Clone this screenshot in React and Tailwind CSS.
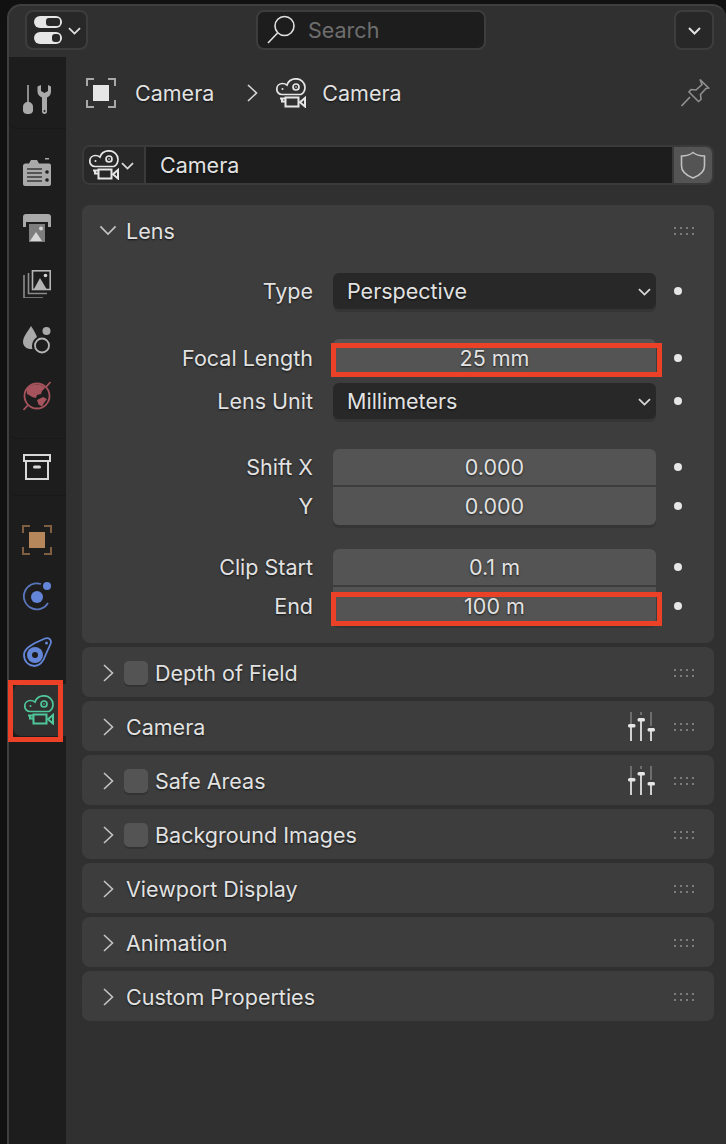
const shadow = '[text-shadow:0_1px_2px_rgba(0,0,0,0.7)]';

function ChevDown({ w = 13, color = '#d8d8d8', sw = 1.800, className = '' }) {
  return (
    <svg width={w} height={w * 0.62} viewBox="0 0 13 8" fill="none" stroke={color} strokeWidth={sw * 13 / w} className={`shrink-0 ${className}`}>
      <path d="M1 1l5.500 5.500L12 1" />
    </svg>
  );
}

function ChevRight({ color = '#c4c4c4', className = '' }) {
  return (
    <svg width="11" height="18" viewBox="0 0 11 18" fill="none" stroke={color} strokeWidth="1.600" className={`shrink-0 ${className}`}>
      <path d="M1 1l8.500 8L1 17" />
    </svg>
  );
}

function CameraIcon({ className = 'text-[#e6e6e6]', size = 30 }) {
  return (
    <svg width={size} height={size} viewBox="0 0 30 30" fill="none" stroke="currentColor" strokeWidth="1.700" className={className}>
      <path d="M6 16.500C2.800 16.500.8 14 .8 11 .8 7.800 3.300 5.500 6.500 5.500c1.800 0 3.200.5 4.500 1.600C12.200 3 15.600.8 20 .8c5 0 9 3.800 9 8.400 0 3.300-1.600 6-4.200 7.300H6Z" />
      <circle cx="20" cy="9" r="3" />
      <circle cx="20" cy="9" r="0.8" fill="currentColor" stroke="none" />
      <circle cx="6.500" cy="11" r="1" fill="currentColor" stroke="none" />
      <path d="M4 20.500h5M9.500 19.500h13v9h-13zM6 20.500v3h3.500" strokeWidth="2" />
      <path d="M29 20v8.500l-5-4.200z" strokeWidth="2" />
    </svg>
  );
}

function ObjectIcon({ color = '#e6e6e6', frame = '#a8a8a8' }) {
  return (
    <svg width="30" height="30" viewBox="0 0 30 30" fill="none">
      <path d="M1 8V1h7M22 1h7v7M29 22v7h-7M8 29H1v-7" stroke={frame} strokeWidth="2" />
      <rect x="7" y="7" width="16" height="16" fill={color} />
    </svg>
  );
}

function ToolIcon() {
  return (
    <svg width="28" height="30" viewBox="0 0 28 30" fill="#a9a9a9">
      <rect x="4.200" y="0" width="1.600" height="18" />
      <path d="M5 17c3 0 5 2 5 5v3c0 3-2 4-5 4s-5-1-5-4v-3c0-3 2-5 5-5Z" />
      <path d="M14.500 1.500v5c0 3 2 5 4.500 6v14c0 1.500 1 2.500 2.500 2.500s2.500-1 2.500-2.500v-14c2.500-1 4-3 4-6v-5l-3-1.500v6l-3.500 2-3.500-2v-6z" />
      <circle cx="21.500" cy="26" r="1" fill="#1d1d1d" />
    </svg>
  );
}

function RenderIcon() {
  return (
    <svg width="28" height="28" viewBox="0 0 28 28" fill="#a9a9a9">
      <path d="M0 8c0-1.500 1-2.500 2.500-2.500H6L8 2h6l2 3.500h10c1.200 0 2 .8 2 2V26c0 1.200-.8 2-2 2H2c-1.200 0-2-.8-2-2Z" />
      <rect x="22" y="0" width="4" height="1.500" />
      <path d="M4 11h15M4 15h15M4 19h15M4 23h15" stroke="#3a3a3a" strokeWidth="1.700" />
      <circle cx="24" cy="14" r="1.800" fill="#1d1d1d" />
      <circle cx="24" cy="22" r="1.800" fill="#1d1d1d" />
    </svg>
  );
}

function OutputIcon() {
  return (
    <svg width="28" height="28" viewBox="0 0 28 28">
      <path d="M0 3c0-2 1-3 3-3h22c2 0 3 1 3 3v10h-3V8H3v5H0Z" fill="#a9a9a9" />
      <rect x="6" y="10" width="16" height="18" fill="#7d7d7d" />
      <path d="M7 27l6-9 6 9Z" fill="#d6d6d6" />
      <circle cx="18" cy="14.500" r="2" fill="#d6d6d6" />
    </svg>
  );
}

function ViewLayerIcon() {
  return (
    <svg width="28" height="28" viewBox="0 0 28 28" fill="none">
      <path d="M1 5v23h19M5.500 3v20.500H24" stroke="#8c8c8c" strokeWidth="1.600" />
      <rect x="9.500" y="0.800" width="17.700" height="18.700" stroke="#b5b5b5" strokeWidth="1.600" />
      <path d="M11 19l6-11 6.500 11Z" fill="#b5b5b5" />
      <circle cx="22.500" cy="5.500" r="1.800" fill="#d6d6d6" />
    </svg>
  );
}

function SceneIcon() {
  return (
    <svg width="30" height="30" viewBox="0 0 30 30" fill="none">
      <path d="M9 1c2 3 5 8 6 11-3 2-5 5-5 9 0 1 0 2 .5 3C5 24.500 1 21.500 1 17 1 12 6 6 9 1Z" fill="#a9a9a9" />
      <circle cx="24.500" cy="6" r="4" fill="#a9a9a9" />
      <circle cx="20" cy="20.500" r="7" stroke="#b5b5b5" strokeWidth="1.800" />
    </svg>
  );
}

function WorldIcon() {
  return (
    <svg width="30" height="30" viewBox="0 0 30 30" fill="none">
      <circle cx="15" cy="15" r="12.500" stroke="#a6535e" strokeWidth="1.800" />
      <path d="M4.500 9C7 5 11 3.500 15 3.500c3.500 0 6.500 1.500 8 3.500l-3 3-1 3-4 1-1 3-4-1-2-1.500L5 13ZM15 19l6-3 4 2-3 4-2 3.500-3.500-2Z" fill="#a6535e" />
      <path d="M1.500 29 6 24M24 6l4.500-5" stroke="#a6535e" strokeWidth="1.800" />
    </svg>
  );
}

function CollectionIcon() {
  return (
    <svg width="28" height="28" viewBox="0 0 28 28" fill="none" stroke="#d9d9d9" strokeWidth="2">
      <rect x="1" y="2" width="26" height="6" />
      <path d="M3 8v18h22V8" />
      <rect x="10" y="12.500" width="8" height="3" rx="1.500" fill="#d9d9d9" stroke="none" />
    </svg>
  );
}

function PhysicsIcon() {
  return (
    <svg width="30" height="30" viewBox="0 0 30 30" fill="none">
      <path d="M19 3a13 13 0 1 0 7 19" stroke="#5a76bd" strokeWidth="1.800" />
      <circle cx="15" cy="16" r="6" fill="#6486d8" />
      <circle cx="25" cy="5" r="4" fill="#6486d8" />
    </svg>
  );
}

function ConstraintIcon() {
  return (
    <svg width="30" height="30" viewBox="0 0 30 30" fill="none">
      <path d="M2 18C2 12 8 9 13 6L23 1.500C27 0 30 3 28.500 7L24 17C22 23 18 29 12.500 29 6.500 29 2 24 2 18Z" stroke="#6486d8" strokeWidth="1.800" />
      <circle cx="13" cy="18" r="8" fill="#6486d8" />
      <circle cx="13" cy="18" r="3" fill="#1d1d1d" />
      <circle cx="24.500" cy="6" r="1.500" fill="#6486d8" />
    </svg>
  );
}

function SlidersIcon() {
  return (
    <svg width="28" height="30" viewBox="0 0 28 30">
      <path d="M3 0v12M13 0v3M23 0v14" stroke="#6e6e6e" strokeWidth="2" />
      <path d="M3 15v14M13 8v21M23 19v10" stroke="#d0d0d0" strokeWidth="2" />
      <rect x="0" y="12" width="7.500" height="3.500" rx="1.500" fill="#e6e6e6" />
      <rect x="9.500" y="6" width="7.500" height="3.500" rx="1.500" fill="#e6e6e6" />
      <rect x="19.500" y="16" width="7.500" height="3.500" rx="1.500" fill="#e6e6e6" />
    </svg>
  );
}

function Grip() {
  return (
    <div className="grid grid-cols-4 gap-x-[4px] gap-y-[4px]">
      {[0, 1, 2, 3, 4, 5, 6, 7].map(i => (
        <span key={i} className="block w-[2px] h-[2px] bg-[#7c7c7c]" />
      ))}
    </div>
  );
}

function Tab({ children, active }) {
  return (
    <div className={`flex items-center justify-center ${active ? 'bg-[#303030] rounded-l-lg ml-[4px] h-[52px] pr-[1px]' : 'h-[56px] pr-[1px]'}`}>
      {children}
    </div>
  );
}

function Dot() {
  return <span className="block w-[8px] h-[8px] rounded-full bg-[#e6e6e6] ml-[18px] shrink-0" />;
}

function Row({ label, height, mt, children }) {
  return (
    <div className={`flex items-center ${mt || ''}`}>
      <div className={`w-[231px] text-right ${shadow}`}>{label}</div>
      <div className={`w-[323px] ml-[20px] ${height}`}>{children}</div>
      <Dot />
    </div>
  );
}

function Select({ value }) {
  return (
    <div className="h-full flex items-center justify-between pl-[14px] pr-[5px] bg-[#282828] rounded-md shadow-[0_3px_0_#353535]">
      <span className={shadow}>{value}</span>
      <ChevDown className="mt-[3px]" />
    </div>
  );
}

function Num({ value, corners, box }) {
  return (
    <div className={`relative h-full flex items-center justify-center bg-[#545454] ${corners}`}>
      <span className={shadow}>{value}</span>
      {box}
    </div>
  );
}

function Panel({ title, check, sliders }) {
  return (
    <div className="h-[50px] pt-[2px] rounded-lg bg-[#3d3d3d] flex items-center pl-[21px] pr-[20px]">
      <ChevRight />
      {check
        ? <span className="w-[24px] h-[24px] ml-[10px] mr-[7px] rounded-[5px] bg-[#545454] shadow-[0_2px_0_#333333] shrink-0" />
        : <span className="w-[12px] shrink-0" />}
      <span className={shadow}>{title}</span>
      <div className="ml-auto flex items-center gap-[18px]">
        {sliders && <SlidersIcon />}
        <Grip />
      </div>
    </div>
  );
}

export default function App() {
  return (
    <div className="w-[726px] h-[1144px] overflow-hidden bg-[#111111] pt-[4px] pl-[7px] text-[21.5px] text-[#e2e2e2] font-['Inter',sans-serif]">
      <div className="h-[1200px] rounded-t-[14px] border-l-2 border-t-2 border-[#3f3f3f] bg-[#303030] flex flex-col">
        <header className="h-[51px] shrink-0 flex items-start pt-[4px] pl-[16px] pr-[12px]">
          <div className="w-[63px] h-[40px] rounded-lg border-2 border-[#3d3d3d] bg-[#282828] flex items-center pl-[7px]">
            <svg width="28" height="30" viewBox="0 0 28 30">
              <rect x="0" y="1" width="28" height="12" rx="6" fill="#e6e6e6" />
              <rect x="12" y="3" width="14" height="8" rx="3" fill="#282828" />
              <rect x="0" y="17" width="28" height="12" rx="6" fill="#e6e6e6" />
              <rect x="18" y="19" width="8" height="8" rx="3" fill="#282828" />
            </svg>
            <ChevDown className="ml-[6px] mt-[3px]" color="#e0e0e0" />
          </div>
          <div className="ml-[168px] w-[230px] h-[40px] rounded-lg border-2 border-[#3d3d3d] bg-[#1d1d1d] flex items-center pl-[8px] text-[#6e6e6e]">
            <svg width="30" height="30" viewBox="0 0 30 30" fill="none" stroke="#e0e0e0" strokeWidth="1.600">
              <circle cx="18.500" cy="11" r="9.500" />
              <path d="M11.500 18 2 28" />
            </svg>
            <span className="ml-[12px]">Search</span>
          </div>
          <div className="ml-auto w-[40px] h-[40px] rounded-lg border-2 border-[#3d3d3d] bg-[#282828] flex items-center justify-center">
            <ChevDown color="#e0e0e0" sw={2} className="mt-[2px]" />
          </div>
        </header>

        <div className="flex flex-1">
          <aside className="w-[57px] shrink-0 bg-[#1d1d1d] pt-[15px]">
            <div className="border-b border-[#181818] rounded-bl-lg">
              <Tab><ToolIcon /></Tab>
            </div>
            <div className="mt-[15px] border-b border-[#181818] rounded-bl-lg pb-[14px]">
              <Tab><RenderIcon /></Tab>
              <Tab><OutputIcon /></Tab>
              <Tab><ViewLayerIcon /></Tab>
              <Tab><SceneIcon /></Tab>
              <Tab><WorldIcon /></Tab>
            </div>
            <div className="border-b border-[#181818] rounded-bl-lg">
              <Tab><CollectionIcon /></Tab>
            </div>
            <div className="mt-[16px]">
              <Tab><ObjectIcon color="#b5875a" frame="#7e5f41" /></Tab>
              <Tab><PhysicsIcon /></Tab>
              <Tab><ConstraintIcon /></Tab>
              <div className="relative mt-[4px]">
                <Tab active><CameraIcon className="text-[#4fc79b]" /></Tab>
                <div className="absolute -left-[1px] top-[-4px] w-[55px] h-[62px] border-[5px] border-[#ea4127]" />
              </div>
            </div>
          </aside>

          <main className="flex-1 pl-[16px] pr-[12px]">
            <div className="h-[72px] flex items-center pl-[4px]">
              <ObjectIcon />
              <span className={`ml-[19px] ${shadow}`}>Camera</span>
              <ChevRight color="#d8d8d8" className="ml-[33px]" />
              <span className="ml-[18px] flex"><CameraIcon /></span>
              <span className={`ml-[16px] ${shadow}`}>Camera</span>
              <svg width="30" height="30" viewBox="0 0 30 30" fill="none" stroke="#8f8f8f" strokeWidth="1.600" className="ml-auto mr-[4px]">
                <path d="M20 1.500 28.500 10l-2.500.5-5.500 6 .5 5-2.500 2-5-5-4.500-4.500 2-2.500 5 .5 6-5.500Z" />
                <path d="M10 19 1.500 28" strokeWidth="1.800" />
              </svg>
            </div>

            <div className="mt-[16px] h-[40px] flex rounded-lg border-2 border-[#3a3a3a] overflow-hidden">
              <div className="w-[62px] shrink-0 bg-[#282828] flex items-center pl-[5px] border-r-2 border-[#3a3a3a]">
                <CameraIcon />
                <ChevDown className="ml-[2px] mt-[3px]" />
              </div>
              <div className={`flex-1 bg-[#1d1d1d] flex items-center pl-[14px] ${shadow}`}>Camera</div>
              <div className="w-[40px] shrink-0 bg-[#545454] border-l-2 border-[#3a3a3a] flex items-center justify-center">
                <svg width="28" height="30" viewBox="0 0 28 30" fill="none" stroke="#c0c0c0" strokeWidth="1.600">
                  <path d="M14 2.500c3 2.500 7 3.500 11.500 3.500v10c0 5-5 9.500-11.500 12C7.500 25.500 2.500 21 2.500 16V6C7 6 11 5 14 2.500Z" />
                </svg>
              </div>
            </div>

            <section className="mt-[20px] h-[438px] rounded-lg bg-[#3d3d3d]">
              <div className="h-[52px] flex items-center pl-[17px] pr-[20px]">
                <ChevDown w={18} color="#c4c4c4" sw={1.600} />
                <span className={`ml-[9px] ${shadow}`}>Lens</span>
                <span className="ml-auto"><Grip /></span>
              </div>
              <div className="pt-[16px]">
                <Row label="Type" height="h-[36px]"><Select value="Perspective" /></Row>
                <Row label="Focal Length" height="h-[38px]" mt="mt-[30px]">
                  <Num
                    value="25 mm"
                    corners="rounded-t-md"
                    box={<div className="absolute -left-[2px] -right-[6px] top-[4px] bottom-0 border-[5px] border-[#ea4127]" />}
                  />
                </Row>
                <Row label="Lens Unit" height="h-[36px]" mt="mt-[6px]"><Select value="Millimeters" /></Row>
                <Row label="Shift X" height="h-[36px]" mt="mt-[30px]"><Num value="0.000" corners="rounded-t-md" /></Row>
                <Row label="Y" height="h-[38px]" mt="mt-[2px]">
                  <Num value="0.000" corners="rounded-b-md shadow-[0_3px_0_#353535]" />
                </Row>
                <Row label="Clip Start" height="h-[36px]" mt="mt-[24px]"><Num value="0.1 m" corners="rounded-t-md" /></Row>
                <Row label="End" height="h-[38px]" mt="mt-[2px]">
                  <Num
                    value="100 m"
                    corners="rounded-b-md shadow-[0_3px_0_#353535]"
                    box={<div className="absolute -left-[2px] -right-[6px] top-[5px] -bottom-[1px] border-[5px] border-[#ea4127]" />}
                  />
                </Row>
              </div>
            </section>

            <div className="mt-[4px] flex flex-col gap-[4px]">
              <Panel title="Depth of Field" check />
              <Panel title="Camera" sliders />
              <Panel title="Safe Areas" check sliders />
              <Panel title="Background Images" check />
              <Panel title="Viewport Display" />
              <Panel title="Animation" />
              <Panel title="Custom Properties" />
            </div>
          </main>
        </div>
      </div>
    </div>
  );
}
